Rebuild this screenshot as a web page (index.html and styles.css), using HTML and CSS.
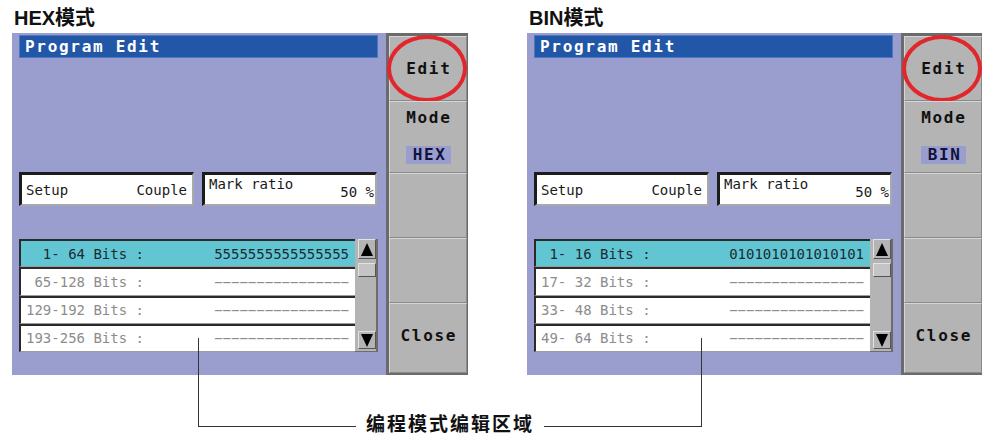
FILE: index.html
```html
<!DOCTYPE html>
<html>
<head>
<meta charset="utf-8">
<link rel="stylesheet" href="styles.css">
</head>
<body>
<div class="page">
  <div class="panel">
    <div class="heading">HEX模式</div>
    <div class="screen">
      <div class="main">
        <div class="titlebar">Program Edit</div>
        <div class="fields">
          <div class="field setup"><span>Setup</span><span>Couple</span></div>
          <div class="field mark"><span class="mark-label">Mark ratio</span><span class="mark-value">50 %</span></div>
        </div>
        <div class="list">
          <div class="rows">
            <div class="row active"><span class="lbl">  1- 64 Bits :</span><span class="val">5555555555555555</span></div>
            <div class="row"><span class="lbl"> 65-128 Bits :</span><span class="val">−−−−−−−−−−−−−−−−</span></div>
            <div class="row"><span class="lbl">129-192 Bits :</span><span class="val">−−−−−−−−−−−−−−−−</span></div>
            <div class="row"><span class="lbl">193-256 Bits :</span><span class="val">−−−−−−−−−−−−−−−−</span></div>
          </div>
          <div class="scroll">
            <div class="sbtn sbtn-up"><svg width="12" height="13" viewBox="0 0 12 13"><polygon points="6,0 12,13 0,13" fill="#000"/></svg></div>
            <div class="thumb"></div>
            <div class="sspace"></div>
            <div class="sbtn sbtn-down"><svg width="12" height="13" viewBox="0 0 12 13"><polygon points="0,0 12,0 6,13" fill="#000"/></svg></div>
          </div>
        </div>
      </div>
      <div class="softkeys">
        <div class="key"><span>Edit</span><div class="ring"></div></div>
        <div class="key key-mode"><span>Mode</span><span class="mode-val">HEX</span></div>
        <div class="key"></div>
        <div class="key"></div>
        <div class="key key-close"><span>Close</span></div>
      </div>
    </div>
  </div>
  <div class="panel">
    <div class="heading">BIN模式</div>
    <div class="screen">
      <div class="main">
        <div class="titlebar">Program Edit</div>
        <div class="fields">
          <div class="field setup"><span>Setup</span><span>Couple</span></div>
          <div class="field mark"><span class="mark-label">Mark ratio</span><span class="mark-value">50 %</span></div>
        </div>
        <div class="list">
          <div class="rows">
            <div class="row active"><span class="lbl"> 1- 16 Bits :</span><span class="val">0101010101010101</span></div>
            <div class="row"><span class="lbl">17- 32 Bits :</span><span class="val">−−−−−−−−−−−−−−−−</span></div>
            <div class="row"><span class="lbl">33- 48 Bits :</span><span class="val">−−−−−−−−−−−−−−−−</span></div>
            <div class="row"><span class="lbl">49- 64 Bits :</span><span class="val">−−−−−−−−−−−−−−−−</span></div>
          </div>
          <div class="scroll">
            <div class="sbtn sbtn-up"><svg width="12" height="13" viewBox="0 0 12 13"><polygon points="6,0 12,13 0,13" fill="#000"/></svg></div>
            <div class="thumb"></div>
            <div class="sspace"></div>
            <div class="sbtn sbtn-down"><svg width="12" height="13" viewBox="0 0 12 13"><polygon points="0,0 12,0 6,13" fill="#000"/></svg></div>
          </div>
        </div>
      </div>
      <div class="softkeys">
        <div class="key"><span>Edit</span><div class="ring"></div></div>
        <div class="key key-mode"><span>Mode</span><span class="mode-val">BIN</span></div>
        <div class="key"></div>
        <div class="key"></div>
        <div class="key key-close"><span>Close</span></div>
      </div>
    </div>
  </div>
</div>
<div class="callout"><span class="callout-text">编程模式编辑区域</span></div>
</body>
</html>
```
FILE: styles.css
```css
html, body {
  margin: 0;
  padding: 0;
}
body {
  width: 982px;
  height: 436px;
  overflow: hidden;
  position: relative;
  background: #ffffff;
}
.page {
  display: flex;
  gap: 59px;
  padding-left: 12px;
}
.panel {
  width: 456px;
  flex: none;
  display: flex;
  flex-direction: column;
}
.heading {
  box-sizing: border-box;
  height: 33px;
  padding: 8px 0 0 2px;
  font-family: "Liberation Sans", "Noto Sans CJK SC", sans-serif;
  font-weight: bold;
  font-size: 20px;
  line-height: 20px;
  color: #111;
}
.screen {
  display: flex;
  height: 342px;
  background: #999ecf;
}
.main {
  width: 374px;
  box-sizing: border-box;
  padding: 2px 8px 0 7px;
  display: flex;
  flex-direction: column;
  font-family: "DejaVu Sans Mono", "Liberation Mono", monospace;
  font-size: 14px;
}
.titlebar {
  box-sizing: border-box;
  height: 23px;
  background: #2256a6;
  border: 1px solid #4c78bf;
  color: #fff;
  font-weight: bold;
  font-size: 16px;
  letter-spacing: 1.7px;
  line-height: 21px;
  padding-left: 5px;
}
.fields {
  display: flex;
  gap: 8px;
  margin-top: 114px;
  padding-right: 1px;
}
.field {
  box-sizing: border-box;
  width: 175px;
  height: 34px;
  background: #fff;
  border-top: 3px solid #1c1c1c;
  border-left: 3px solid #1c1c1c;
  border-bottom: 2px solid #a9a9a9;
  border-right: 2px solid #a9a9a9;
  display: flex;
  justify-content: space-between;
  color: #1a1a1a;
  line-height: 14px;
}
.setup {
  align-items: center;
  padding: 0 5px 0 4px;
}
.mark {
  padding: 2px 1px 5px 4px;
}
.mark-label {
  align-self: flex-start;
}
.mark-value {
  align-self: flex-end;
}
.list {
  display: flex;
  height: 113px;
  margin-top: 33px;
}
.rows {
  flex: 1;
  display: flex;
  flex-direction: column;
}
.row {
  flex: 1;
  box-sizing: border-box;
  display: flex;
  justify-content: space-between;
  align-items: center;
  padding: 0 6px 0 5px;
  background: #fff;
  border-top: 2px solid #2a2a2a;
  border-left: 2px solid #2a2a2a;
  border-bottom: 1px solid #9c9c9c;
  color: #8c8c8c;
  line-height: 14px;
}
.row.active {
  background: #62c6d2;
  color: #1b2a36;
}
.lbl {
  white-space: pre;
}
.scroll {
  width: 23px;
  box-sizing: border-box;
  background: #b4b4b4;
  border-right: 2px solid #6c6c6c;
  border-bottom: 1px solid #6c6c6c;
  padding: 0 0 0 3px;
  display: flex;
  flex-direction: column;
}
.sbtn, .thumb {
  box-sizing: border-box;
  width: 18px;
  background: #b4b4b4;
  border: 1px solid;
  border-color: #e2e2e2 #555 #555 #e2e2e2;
  display: flex;
  align-items: center;
  justify-content: center;
}
.sbtn-up {
  height: 20px;
}
.thumb {
  height: 14px;
  margin-top: 4px;
  background: #c4c4c4;
}
.sspace {
  flex: 1;
}
.sbtn-down {
  height: 18px;
  margin-bottom: 2px;
}
.softkeys {
  width: 82px;
  box-sizing: border-box;
  background: #6b6b6b;
  padding: 3px 1px 2px 3px;
  display: flex;
  flex-direction: column;
}
.key {
  flex: 1;
  position: relative;
  box-sizing: border-box;
  background: #b4b4b4;
  border: 1px solid;
  border-color: #d6d6d6 #8a8a8a #8a8a8a #d6d6d6;
  display: flex;
  flex-direction: column;
  align-items: center;
  justify-content: center;
  font-family: "DejaVu Sans Mono", "Liberation Mono", monospace;
  font-weight: bold;
  font-size: 16px;
  letter-spacing: 1.7px;
  line-height: 18px;
  color: #111;
  padding-left: 1.7px;
}
.key-mode {
  justify-content: flex-start;
  padding-top: 7px;
}
.key-close {
  padding-bottom: 5px;
}
.mode-val {
  margin-top: 19px;
  width: 45px;
  height: 18px;
  background: #999ecf;
  color: #12123a;
  text-align: center;
  line-height: 18px;
  padding-left: 1.7px;
  box-sizing: border-box;
}
.ring {
  position: absolute;
  left: -3px;
  top: -2px;
  width: 80px;
  height: 67px;
  box-sizing: border-box;
  border: 4px solid #e3262b;
  border-radius: 50%;
}
.callout {
  position: absolute;
  left: 198px;
  top: 338px;
  width: 504px;
  height: 89px;
  box-sizing: border-box;
  border-left: 1.5px solid #333;
  border-right: 1.5px solid #333;
  border-bottom: 1.5px solid #333;
  display: flex;
  justify-content: center;
  align-items: flex-end;
}
.callout-text {
  margin-bottom: -6px;
  background: #fff;
  padding: 0 10px;
  font-family: "Noto Sans CJK SC", sans-serif;
  font-weight: bold;
  font-size: 19px;
  letter-spacing: 2px;
  line-height: 18px;
  color: #111;
}
```
